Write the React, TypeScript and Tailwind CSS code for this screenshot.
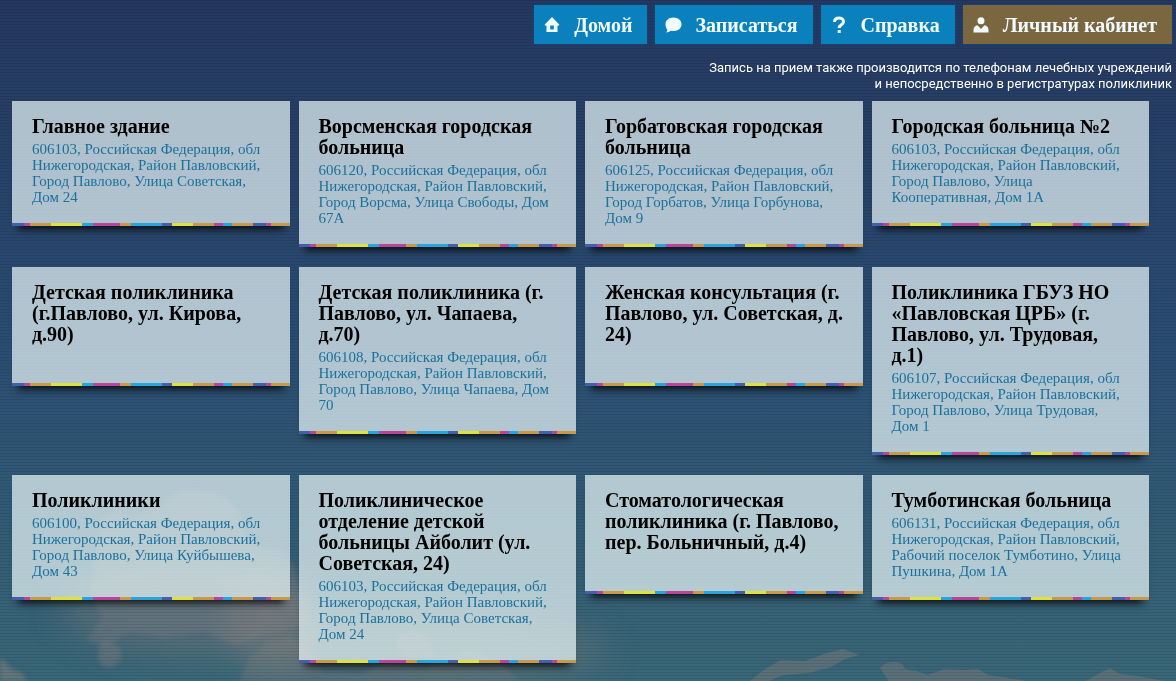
import type { ReactNode } from "react"

type Clinic = { name: string; address?: string }

const clinics: Clinic[] = [
  { name: "Главное здание", address: "606103, Российская Федерация, обл\nНижегородская, Район Павловский,\nГород Павлово, Улица Советская,\nДом 24" },
  { name: "Ворсменская городская\nбольница", address: "606120, Российская Федерация, обл\nНижегородская, Район Павловский,\nГород Ворсма, Улица Свободы, Дом\n67А" },
  { name: "Горбатовская городская\nбольница", address: "606125, Российская Федерация, обл\nНижегородская, Район Павловский,\nГород Горбатов, Улица Горбунова,\nДом 9" },
  { name: "Городская больница №2", address: "606103, Российская Федерация, обл\nНижегородская, Район Павловский,\nГород Павлово, Улица\nКооперативная, Дом 1А" },
  { name: "Детская поликлиника\n(г.Павлово, ул. Кирова,\nд.90)" },
  { name: "Детская поликлиника (г.\nПавлово, ул. Чапаева,\nд.70)", address: "606108, Российская Федерация, обл\nНижегородская, Район Павловский,\nГород Павлово, Улица Чапаева, Дом\n70" },
  { name: "Женская консультация (г.\nПавлово, ул. Советская, д.\n24)" },
  { name: "Поликлиника ГБУЗ НО\n«Павловская ЦРБ» (г.\nПавлово, ул. Трудовая,\nд.1)", address: "606107, Российская Федерация, обл\nНижегородская, Район Павловский,\nГород Павлово, Улица Трудовая,\nДом 1" },
  { name: "Поликлиники", address: "606100, Российская Федерация, обл\nНижегородская, Район Павловский,\nГород Павлово, Улица Куйбышева,\nДом 43" },
  { name: "Поликлиническое\nотделение детской\nбольницы Айболит (ул.\nСоветская, 24)", address: "606103, Российская Федерация, обл\nНижегородская, Район Павловский,\nГород Павлово, Улица Советская,\nДом 24" },
  { name: "Стоматологическая\nполиклиника (г. Павлово,\nпер. Больничный, д.4)" },
  { name: "Тумботинская больница", address: "606131, Российская Федерация, обл\nНижегородская, Район Павловский,\nРабочий поселок Тумботино, Улица\nПушкина, Дом 1А" },
]

const blue = "bg-[#4560a8]"
const magenta = "bg-[#b8459a]"
const orange = "bg-[#c8994a]"
const yellow = "bg-[#dde33c]"
const cyan = "bg-[#2aa5dc]"

const stripe: [string, number][] = [
  [blue, 12], [magenta, 6], [orange, 21], [yellow, 31], [cyan, 11], [magenta, 27],
  [orange, 11], [cyan, 31], [blue, 10], [yellow, 21], [orange, 21], [magenta, 9],
  [cyan, 9], [orange, 21], [blue, 13], [magenta, 5], [orange, 19],
]

function Stripe() {
  return (
    <div className="flex h-[3px]" aria-hidden="true">
      {stripe.map(([color, size], i) => (
        <span key={i} className={color} style={{ flexGrow: size }} />
      ))}
    </div>
  )
}

function NavLink({ icon, children, className = "bg-[#0a80bd]" }: { icon: ReactNode; children: ReactNode; className?: string }) {
  return (
    <a
      href="#"
      className={`flex h-[39px] items-center gap-3 pl-2 pr-[15px] font-['Liberation_Serif',serif] text-xl font-bold text-[#f0fbff] shadow-[0_0_4px_rgba(10,90,150,0.5)] ${className}`}
    >
      {icon}
      {children}
    </a>
  )
}

const HomeIcon = () => (
  <svg className="size-5" viewBox="0 0 20 20" fill="currentColor" aria-hidden="true">
    <path fillRule="evenodd" d="M10 2 17.200 9.500v1H15.500V17h-11v-6.500H2.800v-1zM8.200 10.500v4h3.600v-4z" />
  </svg>
)

const ChatIcon = () => (
  <svg className="size-5" viewBox="0 0 20 20" fill="currentColor" aria-hidden="true">
    <path d="M10.500 2.500c4.600 0 8 2.800 8 6.700s-3.400 6.900-8 6.900c-1 0-2-.1-2.800-.4-1.200 1-2.800 1.700-4.700 1.800 1-.9 1.300-2 1.300-3C3 13 2.500 11.300 2.500 9.200c0-3.900 3.400-6.700 8-6.700z" />
  </svg>
)

const HelpIcon = () => (
  <svg className="size-5" viewBox="0 0 20 20" fill="none" stroke="currentColor" strokeWidth="3" aria-hidden="true">
    <path d="M5.500 7c0-2.800 2-4 4.500-4s4.500 1.400 4.500 3.800c0 3.200-4.300 2.900-4.300 6.200" />
    <path d="M10.200 15v3" />
  </svg>
)

const UserIcon = () => (
  <svg className="size-5" viewBox="0 0 20 20" fill="currentColor" aria-hidden="true">
    <circle cx="10" cy="5.800" r="3.500" />
    <path d="M2.500 17.500v-2.500c0-2.600 1.600-4.300 4-4.800L10 14l3.500-3.800c2.400.5 4 2.200 4 4.800v2.500z" />
  </svg>
)

function Clouds() {
  return (
    <svg
      className="absolute inset-x-0 bottom-0 h-[221px] w-full"
      viewBox="0 0 1176 221"
      preserveAspectRatio="none"
      aria-hidden="true"
    >
      <defs>
        <filter id="edge" x="-10%" y="-10%" width="120%" height="120%">
          <feGaussianBlur stdDeviation="2" />
        </filter>
        <filter id="haze" x="-30%" y="-80%" width="160%" height="260%">
          <feGaussianBlur stdDeviation="16" />
        </filter>
      </defs>
      <g filter="url(#haze)" fill="#8b8582">
        <ellipse cx="190" cy="150" rx="130" ry="45" opacity="0.35" />
        <ellipse cx="270" cy="165" rx="45" ry="50" opacity="0.4" />
        <ellipse cx="440" cy="190" rx="170" ry="35" opacity="0.3" />
      </g>
      <g filter="url(#edge)" fill="#8b8582">
        <path d="M100 60l18-8 14 6 30-12 10-12 14-4 28 2 14 8 12 12 4 24 14 12 26 4 10 14 6 30v30l-40 10-24 10-30-14-40 6-36-6-24 14-20-6 16-22-14-30 10-34z" opacity="0.25" />
        <path d="M100 184q6-4 14-1 9 5 7 16-6 10-15 8-9-4-8-12z" opacity="0.35" />
        <path d="M0 198q8 5 12 12 10 0 15 11H0z" opacity="0.5" />
        <path d="M250 196l18-14 24-4 20 14 10 20 40 2 30-16 30 12 20-12 24-8 20 6 20 12 14 13H240z" opacity="0.25" />
        <path d="M395 185l6-12 14-4 14 10 6 20h-30z" opacity="0.25" />
      </g>
      <g fill="#8b7f7e" opacity="0.4">
        <path d="M750 221l15-12 16-9 24 1 22-8 16-4 16 6-14 4-14 8-22 6-25 2-15 6z" />
        <path d="M880 208q5-7 15-6 9 1 10 7 5 2 12 2l10 4 18-6 18 1 15-1 10 6 20 3 18 3h60l14-8 10-5 10 6 18 2 26 5v2H890z" />
      </g>
    </svg>
  )
}

export default function App() {
  return (
    <div className="relative min-h-screen overflow-hidden bg-linear-to-b from-[#253860] via-[#2a4d72] to-[#3a6777]">
      <Clouds />
      <div className="absolute inset-0 bg-[repeating-linear-gradient(to_bottom,rgba(0,0,0,0.09)_0px,rgba(0,0,0,0.09)_1px,transparent_1px,transparent_3px)]" />

      <div className="relative">
        <header className="flex flex-col items-end pr-1 pt-[5px]">
          <nav className="flex gap-2">
            <NavLink icon={<HomeIcon />}>Домой</NavLink>
            <NavLink icon={<ChatIcon />}>Записаться</NavLink>
            <NavLink icon={<HelpIcon />}>Справка</NavLink>
            <NavLink icon={<UserIcon />} className="bg-[#7b673f]">Личный кабинет</NavLink>
          </nav>
          <p className="mt-4 text-right font-['Roboto',sans-serif] text-[13px] leading-4 text-white">
            Запись на прием также производится по телефонам лечебных учреждений
            <br />
            и непосредственно в регистратурах поликлиник
          </p>
        </header>

        <main className="grid grid-cols-4 items-start gap-x-[9px] gap-y-5 pb-[18px] pl-3 pr-[27px] pt-[9px] font-['Liberation_Serif',serif]">
          {clinics.map((clinic) => (
            <article key={clinic.name} className="bg-[#f2ffff]/68 shadow-[0_9px_8px_-6px_rgba(0,0,0,0.85)]">
              <div className="pb-[18px] pl-5 pr-3 pt-[15px]">
                <h2 className="whitespace-pre-line text-xl font-bold leading-[21px] text-black">{clinic.name}</h2>
                <p className="mt-1 min-h-4 whitespace-pre-line text-[15px] leading-4 text-[#1b719c]">{clinic.address}</p>
              </div>
              <Stripe />
            </article>
          ))}
        </main>
      </div>
    </div>
  )
}
